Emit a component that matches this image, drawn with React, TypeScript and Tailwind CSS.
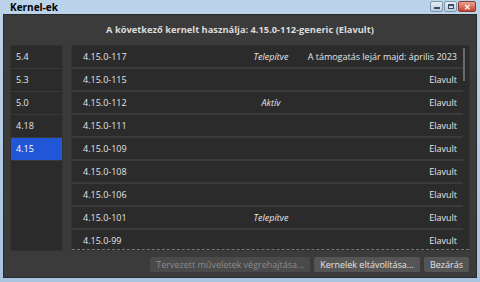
import React from "react";

const majors = ["5.4", "5.3", "5.0", "4.18", "4.15"];
const rows: { v: string; mid?: string; right: string }[] = [
  { v: "4.15.0-117", mid: "Telepítve", right: "A támogatás lejár majd: április 2023" },
  { v: "4.15.0-115", right: "Elavult" },
  { v: "4.15.0-112", mid: "Aktív", right: "Elavult" },
  { v: "4.15.0-111", right: "Elavult" },
  { v: "4.15.0-109", right: "Elavult" },
  { v: "4.15.0-108", right: "Elavult" },
  { v: "4.15.0-106", right: "Elavult" },
  { v: "4.15.0-101", mid: "Telepítve", right: "Elavult" },
  { v: "4.15.0-99", right: "Elavult" },
];

export default function App() {
  return (
    <div
      className="w-[480px] h-[282px] bg-gradient-to-b from-[#bcd4ea] to-[#a9c4df] flex flex-col overflow-hidden"
      style={{ fontFamily: '"Open Sans", "Noto Sans", sans-serif' }}
    >
      <div className="h-[14px] flex items-center justify-between pl-[10px] pr-[4px]">
        <span className="text-[10px] font-bold text-black leading-none">Kernel-ek</span>
        <div className="flex items-start gap-[1px] self-start mt-[1px]">
          <div className="w-[13px] h-[11px] rounded-[2px] border border-[#7f95ab] bg-gradient-to-b from-[#e6eef7] to-[#b8cbe0] flex items-end justify-center pb-[2px]">
            <div className="w-[6px] h-[2px] bg-[#3c4a5a]" />
          </div>
          <div className="w-[13px] h-[11px] rounded-[2px] border border-[#7f95ab] bg-gradient-to-b from-[#e6eef7] to-[#b8cbe0] flex items-center justify-center">
            <div className="w-[6px] h-[5px] border border-[#3c4a5a] border-t-2" />
          </div>
          <div className="w-[18px] h-[11px] rounded-[2px] border border-[#8a3a2e] bg-gradient-to-b from-[#e8a191] to-[#c4402a] flex items-center justify-center text-white text-[8px] font-bold leading-none">
            ✕
          </div>
        </div>
      </div>
      <div className="flex-1 mx-[3px] mb-[4px] bg-[#3b3b3b] border border-[#2a2a2a] flex flex-col">
        <div className="h-[30px] flex items-center justify-center text-[9.3px] font-bold text-[#dcdcdc] whitespace-nowrap">
          A következő kernelt használja: 4.15.0-112-generic (Elavult)
        </div>
        <div className="flex gap-[8px] pl-[6px] pr-[6px] h-[206px]">
          <div className="w-[53px] bg-[#2b2b2b] border border-[#333] flex flex-col">
            {majors.map((m, i) => (
              <div
                key={m}
                className={
                  "h-[23px] flex items-center pl-[5px] text-[9px] border-b border-[#3a3a3a] " +
                  (i === 4 ? "bg-[#2156d6] text-white" : "text-[#e4e4e4]")
                }
              >
                {m}
              </div>
            ))}
          </div>
          <div className="flex-1 bg-[#2b2b2b] border border-[#333] flex relative overflow-hidden">
            <div className="flex-1 flex flex-col min-w-0">
              {rows.map((r) => (
                <div
                  key={r.v}
                  className="h-[23px] shrink-0 flex items-center pl-[11px] pr-[6px] text-[9px] text-[#e4e4e4] border-b-[2px] border-[#3a3a3a] whitespace-nowrap"
                >
                  <span className="w-[163px] shrink-0">{r.v}</span>
                  <span className="w-[50px] shrink-0 flex justify-center italic">{r.mid ?? ""}</span>
                  <span className="flex-1 text-right">{r.right}</span>
                </div>
              ))}
            </div>
            <div className="w-[6px] flex justify-start pt-[2px]">
              <div className="w-[2px] h-[33px] bg-[#6a6a6a]" />
            </div>
            <div className="absolute left-0 right-0 bottom-0 border-b border-dashed border-[#777]" />
          </div>
        </div>
        <div className="flex justify-end gap-[4px] pr-[7px] mt-[6px]">
          <div className="h-[15px] px-[6px] flex items-center rounded-[2px] bg-[#4a4a4a] text-[9px] text-[#8a8a8a]">
            Tervezett műveletek végrehajtása...
          </div>
          <div className="h-[15px] px-[6px] flex items-center rounded-[2px] bg-[#555] text-[9px] text-[#e4e4e4]">
            Kernelek eltávolítása...
          </div>
          <div className="h-[15px] px-[6px] flex items-center rounded-[2px] bg-[#555] text-[9px] text-[#e4e4e4]">
            Bezárás
          </div>
        </div>
      </div>
    </div>
  );
}
